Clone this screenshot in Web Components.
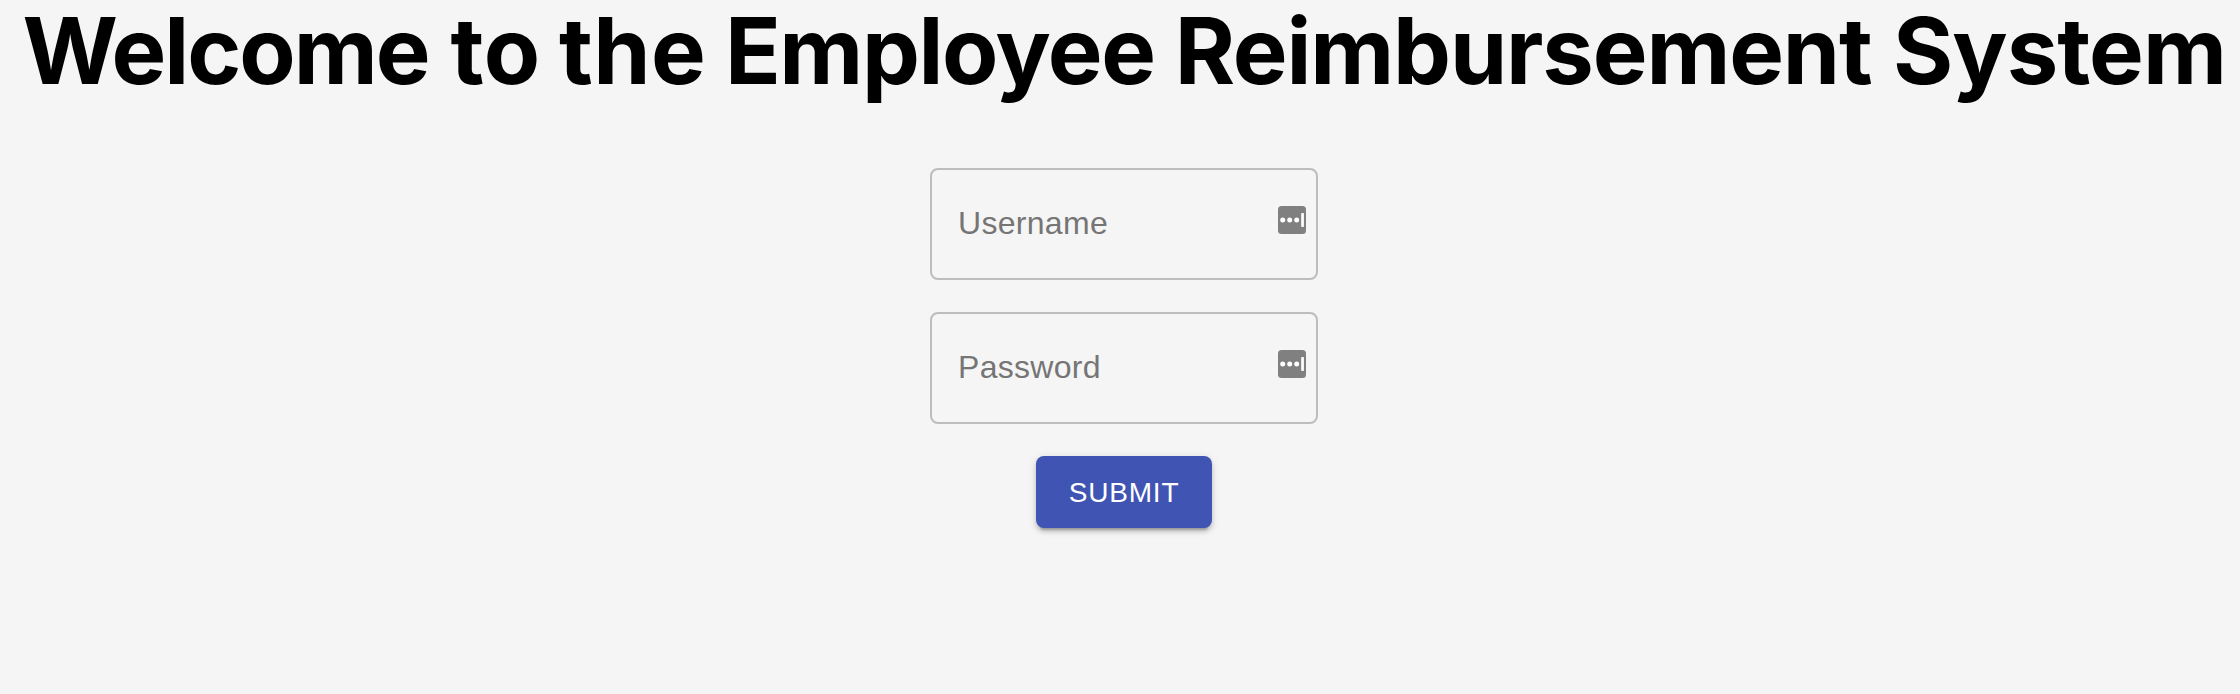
<!DOCTYPE html>
<html lang="en">
<head>
<meta charset="utf-8">
<title>Employee Reimbursement System</title>
<style>
html,body{margin:0;background:#f5f5f5}
</style>
</head>
<body>
<login-page></login-page>
<script>
class PageTitle extends HTMLElement{
  constructor(){
    super();
    this.attachShadow({mode:'open'}).innerHTML=`
<style>
:host{display:block}
h1{margin:0;font:700 92px/102px Inter,"Liberation Sans",sans-serif;color:#000;white-space:nowrap;text-align:left;padding-left:22.5px}
</style><h1><slot></slot></h1>`;
  }
}
class TitleWord extends HTMLElement{
  constructor(){
    super();
    this.attachShadow({mode:'open'}).innerHTML=`
<style>:host{display:inline}</style><slot></slot>`;
  }
}
class FillIcon extends HTMLElement{
  constructor(){
    super();
    this.attachShadow({mode:'open'}).innerHTML=`
<style>:host{display:block;width:28px;height:28px}svg{display:block}</style>
<svg width="28" height="28" viewBox="0 0 28 28"><rect width="28" height="28" rx="3.5" fill="#808080"/><g fill="#fff"><circle cx="4.7" cy="14" r="2.5"/><circle cx="11.7" cy="14" r="2.5"/><circle cx="18.7" cy="14" r="2.5"/><rect x="23.2" y="7" width="2.7" height="14" rx=".8"/></g></svg>`;
  }
}
class TextField extends HTMLElement{
  constructor(){
    super();
    this.attachShadow({mode:'open'}).innerHTML=`
<style>
:host{display:flex;box-sizing:border-box;width:388px;height:112px;border:2px solid #bdbdbd;border-radius:8px;padding:0 10px 0 26px;align-items:center;justify-content:space-between}
label{font:400 32px/38px "Liberation Sans",Arial,sans-serif;letter-spacing:.3px;color:#757575;padding-bottom:2px}
fill-icon{margin-bottom:8px}
</style><label><slot></slot></label><fill-icon></fill-icon>`;
  }
}
class SubmitButton extends HTMLElement{
  constructor(){
    super();
    this.attachShadow({mode:'open'}).innerHTML=`
<style>
:host{display:block}
button{display:block;box-sizing:border-box;width:176px;height:72px;margin:0;padding:0;border:0;border-radius:8px;background:#4054b4;color:#fff;font:400 28px/49px "Liberation Sans",Arial,sans-serif;letter-spacing:.8px;box-shadow:0 6px 2px -4px rgba(0,0,0,.2),0 4px 4px rgba(0,0,0,.14),0 2px 10px rgba(0,0,0,.12)}
</style><button type="button"><slot></slot></button>`;
  }
}
class LoginPage extends HTMLElement{
  constructor(){
    super();
    this.attachShadow({mode:'open'}).innerHTML=`
<style>
:host{display:block;height:694px}
form{display:flex;flex-direction:column;align-items:center;gap:32px;padding:66px 0 0 8px}
.w1{letter-spacing:-1.98px}
.w2{letter-spacing:.5px}
.w3{letter-spacing:.5px;margin-left:-3.5px}
.w4{letter-spacing:-1.4px;margin-left:-3.3px}
.w5{letter-spacing:-1.15px;margin-left:-1.7px}
.w6{letter-spacing:-.95px;margin-left:-.4px}
</style>
<page-title><title-word class="w1">Welcome</title-word> <title-word class="w2">to</title-word> <title-word class="w3">the</title-word> <title-word class="w4">Employee</title-word> <title-word class="w5">Reimbursement</title-word> <title-word class="w6">System</title-word></page-title>
<form><text-field>Username</text-field><text-field>Password</text-field><submit-button>SUBMIT</submit-button></form>`;
  }
}
customElements.define('page-title',PageTitle);
customElements.define('title-word',TitleWord);
customElements.define('fill-icon',FillIcon);
customElements.define('text-field',TextField);
customElements.define('submit-button',SubmitButton);
customElements.define('login-page',LoginPage);
</script>
</body>
</html>
